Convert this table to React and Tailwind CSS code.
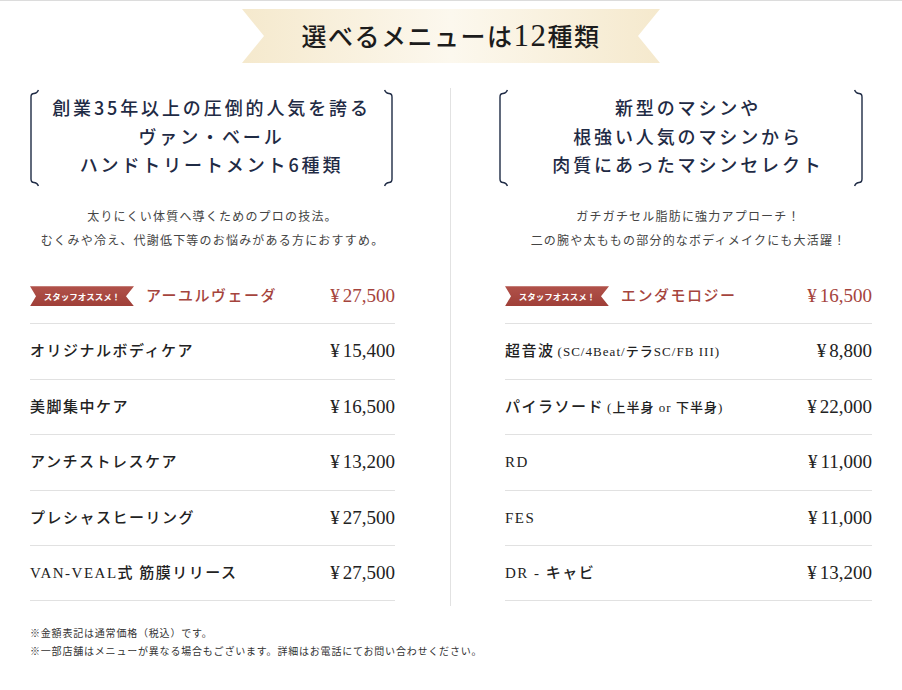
import React from 'react';

const serif = "font-['Liberation_Serif','Noto_Sans_CJK_JP',serif]";
const sans = "font-['Noto_Sans_CJK_JP','Noto_Sans',sans-serif]";

const leftItems = [
  { name: 'オリジナルボディケア', price: '15,400' },
  { name: '美脚集中ケア', price: '16,500' },
  { name: 'アンチストレスケア', price: '13,200' },
  { name: 'プレシャスヒーリング', price: '27,500' },
  { name: 'VAN-VEAL式 筋膜リリース', price: '27,500' },
];

const rightItems = [
  { name: '超音波', sub: '(SC/4Beat/テラSC/FB III)', price: '8,800' },
  { name: 'パイラソード', sub: '(上半身 or 下半身)', price: '22,000' },
  { name: 'RD', price: '11,000' },
  { name: 'FES', price: '11,000' },
  { name: 'DR - キャビ', price: '13,200' },
];

function Bracket({ flip }) {
  return (
    <svg width="9" height="98" viewBox="0 0 9 98" className="shrink-0">
      <path
        d={
          flip
            ? 'M0.5 1 Q2 4.5 5 4.5 Q8 4.5 8 8 V90 Q8 93.5 5 93.5 Q2 93.5 0.5 97'
            : 'M8.5 1 Q7 4.5 4 4.5 Q1 4.5 1 8 V90 Q1 93.5 4 93.5 Q7 93.5 8.5 97'
        }
        fill="none"
        stroke="#1f2b45"
        strokeWidth="1.4"
      />
    </svg>
  );
}

function Badge() {
  return (
    <div className="w-[104px] h-[20px] shrink-0 flex items-center justify-center bg-[linear-gradient(180deg,#b1524a,#9f3f38)] [clip-path:polygon(0_0,100%_0,calc(100%-8px)_50%,100%_100%,0_100%,6px_50%)]">
      <span className={`${sans} text-[8.5px] font-bold text-white leading-none`}>スタッフオススメ！</span>
    </div>
  );
}

function Row({ name, sub, price, featured }) {
  return (
    <div className="h-[55.4px] border-b border-[#e1e1e1] flex items-center justify-between">
      <div className="flex items-center">
        {featured && <Badge />}
        <span
          className={`${serif} text-[15px] font-medium tracking-[0.1em] ${featured ? 'ml-3 text-[#a5443d]' : 'text-[#222]'}`}
        >
          {name}
          {sub && <span className="text-[13px] tracking-[0.08em] ml-[3px]">{sub}</span>}
        </span>
      </div>
      <span className={`${serif} text-[19px] ${featured ? 'text-[#a5443d]' : 'text-[#222]'}`}>
        <span className="mr-[3px]">¥</span>
        {price}
      </span>
    </div>
  );
}

function Column({ heading, desc, featured, items, shift }) {
  return (
    <div className="flex flex-col pb-[5px]">
      <div className={`flex h-[98px] mt-[1px] ${shift ? '-ml-[6px] mr-[9px]' : 'mr-[2px]'}`}>
        <Bracket />
        <div
          className={`flex-1 flex flex-col items-center pt-[4px] ${shift ? 'pl-[14px]' : ''} ${sans} text-[18px] font-medium leading-[28.5px] tracking-[0.16em] text-[#1f2b45]`}
        >
          {heading.map((l) => (
            <div key={l}>{l}</div>
          ))}
        </div>
        <Bracket flip />
      </div>
      <div className={`mt-[17px] ${sans} text-[12px] leading-[24px] tracking-[0.1em] text-[#444] text-center`}>
        {desc.map((l) => (
          <div key={l}>{l}</div>
        ))}
      </div>
      <div className="mt-[17px]">
        <Row name={featured.name} price={featured.price} featured />
        {items.map((it) => (
          <Row key={it.name} {...it} />
        ))}
      </div>
    </div>
  );
}

export default function App() {
  return (
    <div className="w-[902px] min-h-[690px] bg-white border-t border-[#dcdcdc]">
      <div className="pt-2 flex justify-center">
        <div className="w-[418px] h-[54px] flex items-center justify-center bg-[linear-gradient(90deg,#f5e9cd,#fcf8ee_50%,#f5e9cd)] [clip-path:polygon(0_0,100%_0,calc(100%-22px)_50%,100%_100%,0_100%,22px_50%)]">
          <span className={`${sans} text-[25px] font-medium tracking-[0.06em] text-[#1c1c1c]`}>
            選べるメニューは
            <span className="font-['Liberation_Serif',serif] text-[31px] font-normal">12</span>
            種類
          </span>
        </div>
      </div>

      <div className="mt-[25px] flex px-[30px]">
        <div className="w-[365px]">
          <Column
            heading={['創業35年以上の圧倒的人気を誇る', 'ヴァン・ベール', 'ハンドトリートメント6種類']}
            desc={['太りにくい体質へ導くためのプロの技法。', 'むくみや冷え、代謝低下等のお悩みがある方におすすめ。']}
            featured={{ name: 'アーユルヴェーダ', price: '27,500' }}
            items={leftItems}
          />
        </div>
        <div className="w-[110px] flex justify-center">
          <div className="w-px bg-[#e2e2e2]" />
        </div>
        <div className="flex-1">
          <Column
            heading={['新型のマシンや', '根強い人気のマシンから', '肉質にあったマシンセレクト']}
            desc={['ガチガチセル脂肪に強力アプローチ！', '二の腕や太ももの部分的なボディメイクにも大活躍！']}
            featured={{ name: 'エンダモロジー', price: '16,500' }}
            items={rightItems}
            shift
          />
        </div>
      </div>

      <div className={`px-[30px] mt-[18px] ${sans} text-[10px] leading-[18px] tracking-[0.08em] text-[#333]`}>
        <div>※金額表記は通常価格（税込）です。</div>
        <div>※一部店舗はメニューが異なる場合もございます。詳細はお電話にてお問い合わせください。</div>
      </div>
    </div>
  );
}
